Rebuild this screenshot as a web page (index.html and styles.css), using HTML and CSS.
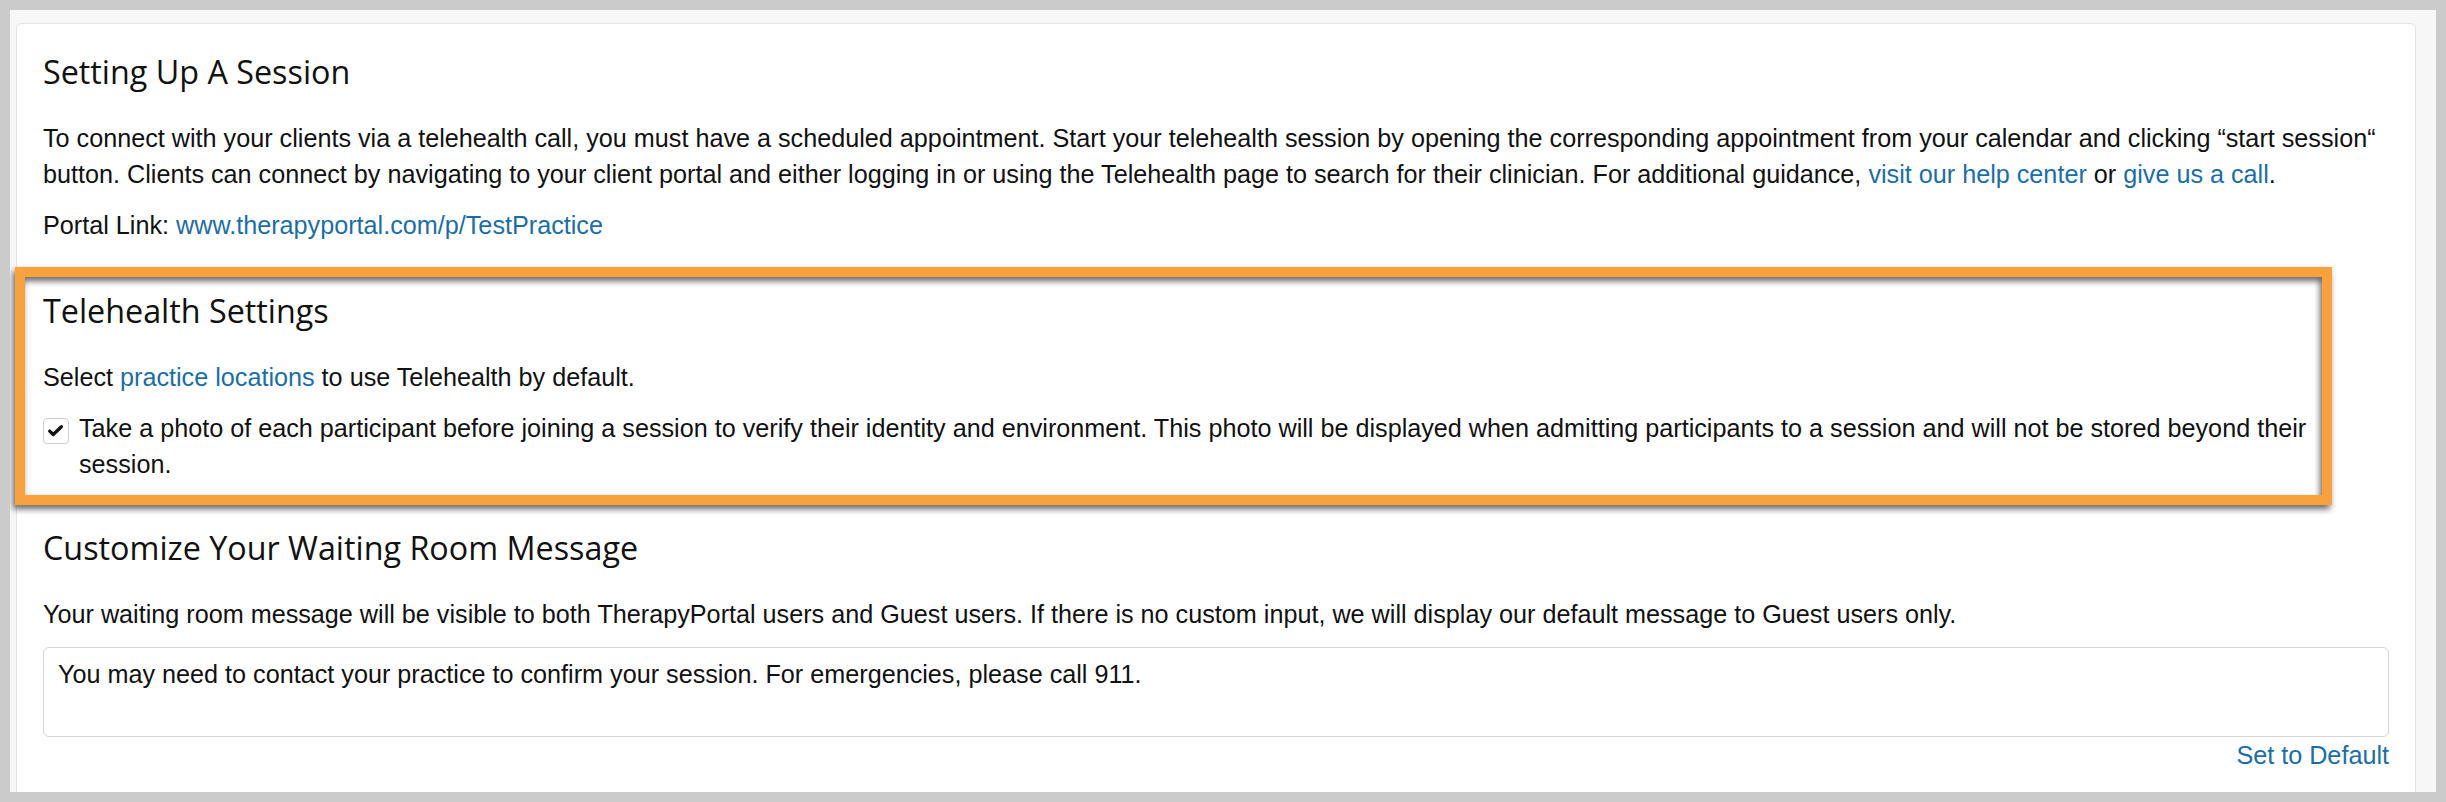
FILE: index.html
```html
<!DOCTYPE html>
<html lang="en">
<head>
<meta charset="utf-8">
<title>Telehealth</title>
<link rel="stylesheet" href="styles.css">
</head>
<body>
<div class="viewport">
  <div class="card">
    <section class="block block-setup">
      <h3>Setting Up A Session</h3>
      <p>To connect with your clients via a telehealth call, you must have a scheduled appointment. Start your telehealth session by opening the corresponding appointment from your calendar and clicking “start session“ button. Clients can connect by navigating to your client portal and either logging in or using the Telehealth page to search for their clinician. For additional guidance, <a href="#">visit our help center</a> or <a href="#">give us a call</a>.</p>
      <p>Portal Link: <a href="#">www.therapyportal.com/p/TestPractice</a></p>
    </section>

    <section class="block block-telehealth">
      <h3>Telehealth Settings</h3>
      <p>Select <a href="#">practice locations</a> to use Telehealth by default.</p>
      <label class="check-row">
        <span class="checkbox"><svg viewBox="0 0 26 26" width="25" height="25"><path d="M6.2 12.6 L10 16.2 L18.8 7.8" fill="none" stroke="#111" stroke-width="3.6" stroke-linecap="round" stroke-linejoin="round"/></svg></span>
        <span class="check-text">Take a photo of each participant before joining a session to verify their identity and environment. This photo will be displayed when admitting participants to a session and will not be stored beyond their session.</span>
      </label>
      <div class="highlight" aria-hidden="true"></div>
    </section>

    <section class="block block-waiting">
      <h3>Customize Your Waiting Room Message</h3>
      <p>Your waiting room message will be visible to both TherapyPortal users and Guest users. If there is no custom input, we will display our default message to Guest users only.</p>
      <div class="textarea">You may need to contact your practice to confirm your session. For emergencies, please call 911.</div>
      <div class="actions"><a href="#">Set to Default</a></div>
    </section>
  </div>
</div>
</body>
</html>
```

FILE: styles.css
```css
html, body {
  margin: 0;
  height: 100%;
  overflow: hidden;
}

body {
  background: #cbcbcb;
  padding: 10px;
  box-sizing: border-box;
  font-family: "Liberation Sans", Arial, Helvetica, sans-serif;
  font-size: 25.2px;
  line-height: 36px;
  color: #111;
}

.viewport {
  background: #f7f7f7;
  height: 100%;
  overflow: hidden;
  padding: 13px 20px 0 6px;
  box-sizing: border-box;
}

.card {
  background: #fff;
  border: 1px solid #e4e4e4;
  border-radius: 5px;
  padding: 30px 26px 80px;
}

.block {
  display: flow-root;
  position: relative;
}

.block-telehealth {
  margin-top: 35px;
}

.block-waiting {
  margin-top: 38px;
}

h3 {
  font-family: "Open Sans", sans-serif;
  font-weight: 400;
  font-size: 32.3px;
  line-height: 35px;
  margin: 0 0 31px;
  color: #111;
}

p {
  margin: 0 0 15px;
}

a {
  color: #1a6ea8;
  text-decoration: none;
}

.check-row {
  display: flex;
  align-items: flex-start;
  gap: 10px;
  margin-bottom: 10px;
}

.checkbox {
  flex: none;
  width: 26px;
  height: 26px;
  margin-top: 8px;
  border: 1px solid #cfcfcf;
  border-radius: 4px;
  box-sizing: border-box;
  background: #fff;
  display: flex;
  align-items: center;
  justify-content: center;
}

.check-text {
  flex: 1;
}

.highlight {
  position: absolute;
  top: -26px;
  bottom: -13px;
  left: -28px;
  right: 57px;
  border: 10px solid #f9a13b;
  pointer-events: none;
  filter: drop-shadow(-2px 4px 3px rgba(0, 0, 0, 0.6));
}

.textarea {
  margin-top: 15px;
  border: 1px solid #d6d6d6;
  border-radius: 6px;
  padding: 8px 14px;
  min-height: 72px;
}

.actions {
  text-align: right;
}
```
